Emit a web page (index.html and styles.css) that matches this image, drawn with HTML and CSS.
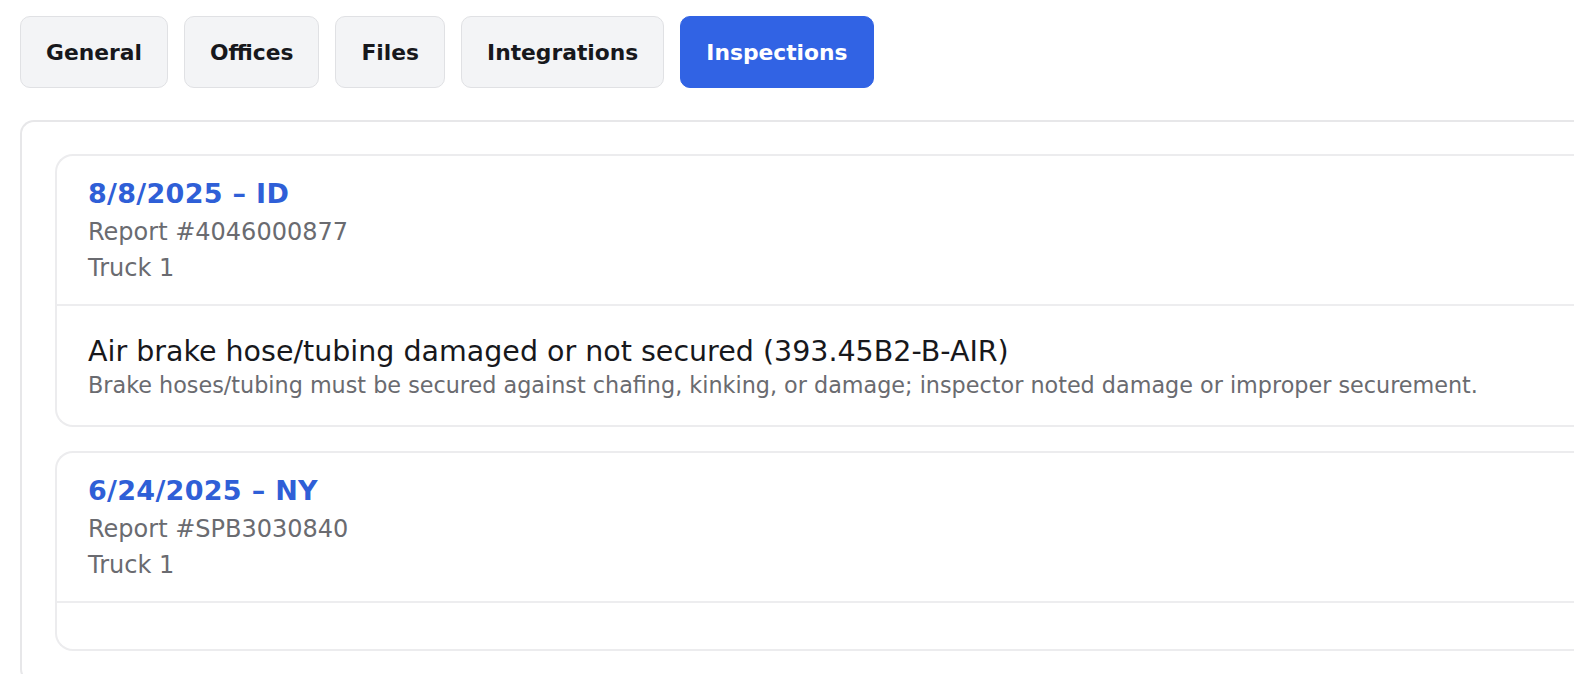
FILE: index.html
```html
<!DOCTYPE html>
<html>
  <head>
    <title>Inspections</title>
    <link rel="stylesheet" href="styles.css">
  </head>

  <body>
    <div id="page">
      <div id="tabs">
        <button class="tab" type="button">General</button>
        <button class="tab" type="button">Offices</button>
        <button class="tab" type="button">Files</button>
        <button class="tab" type="button">Integrations</button>
        <button class="tab active" type="button">Inspections</button>
      </div>

      <div id="panel">
        <div class="inspection">
          <div class="inspection-head">
            <div class="inspection-title">8/8/2025 – ID</div>
            <div class="inspection-meta">Report #4046000877</div>
            <div class="inspection-meta">Truck 1</div>
          </div>
          <div class="inspection-body">
            <div class="violation">
              <div class="violation-title">Air brake hose/tubing damaged or not secured (393.45B2-B-AIR)</div>
              <div class="violation-desc">Brake hoses/tubing must be secured against chafing, kinking, or damage; inspector noted damage or improper securement.</div>
            </div>
          </div>
        </div>

        <div class="inspection">
          <div class="inspection-head">
            <div class="inspection-title">6/24/2025 – NY</div>
            <div class="inspection-meta">Report #SPB3030840</div>
            <div class="inspection-meta">Truck 1</div>
          </div>
          <div class="inspection-body empty"></div>
        </div>
      </div>
    </div>
  </body>
</html>
```

FILE: styles.css
```css
* {
  box-sizing: border-box;
}

body {
  margin: 0;
  background: #ffffff;
  color: #1b1b1f;
  font-family: 'DejaVu Sans', sans-serif;
  overflow: hidden;
}

#page {
  padding: 16px 0 0 20px;
  width: 1640px;
}

#tabs {
  display: flex;
  gap: 16px;
}

.tab {
  height: 72px;
  padding: 0 25px;
  border: 1px solid #e0e1e4;
  border-radius: 10px;
  background: #f3f4f6;
  color: #17181c;
  font-family: inherit;
  font-size: 21.8px;
  font-weight: 600;
  cursor: pointer;
}

.tab.active {
  background: #3163e4;
  border-color: #3163e4;
  color: #ffffff;
}

#panel {
  margin-top: 32px;
  padding: 32px 33px 30px;
  border: 2px solid #e7e7e9;
  border-right: none;
  border-radius: 14px 0 0 14px;
  display: flex;
  flex-direction: column;
  gap: 24px;
}

.inspection {
  border: 2px solid #ececee;
  border-right: none;
  border-radius: 18px 0 0 18px;
  background: #ffffff;
}

.inspection-head {
  padding: 18px 31px 18px;
  border-bottom: 2px solid #ededef;
}

.inspection-title {
  color: #2f5fd7;
  font-size: 27px;
  font-weight: 600;
  line-height: 40px;
  letter-spacing: 0.3px;
}

.inspection-meta {
  color: #6a6b70;
  font-size: 24px;
  line-height: 36px;
}

.inspection-body {
  padding: 28px 31px 25px;
}

.inspection-body.empty {
  height: 46px;
  padding: 0;
}

.violation-title {
  font-size: 28.5px;
  line-height: 36px;
  color: #17181c;
}

.violation-desc {
  font-size: 22.3px;
  line-height: 30px;
  color: #6a6b70;
}
```
